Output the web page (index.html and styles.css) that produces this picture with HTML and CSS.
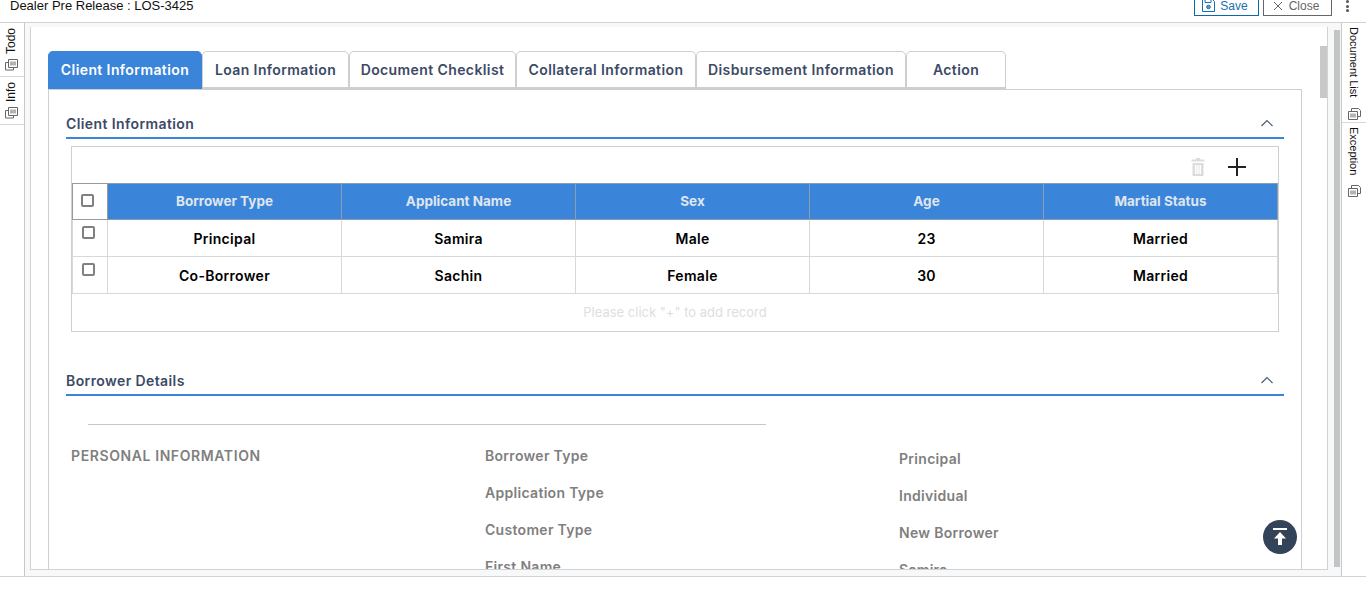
FILE: index.html
```html
<!DOCTYPE html>
<html lang="en">
<head>
  <meta charset="UTF-8">
  <meta name="viewport" content="width=device-width, initial-scale=1.0">
  <title>Dealer Pre Release</title>
  <link rel="stylesheet" href="styles.css">
</head>
<body>
  <header class="topbar">
    <div class="page-title">Dealer Pre Release : LOS-3425</div>
    <div class="top-actions">
      <button class="btn btn-save">
        <svg width="13" height="13" viewBox="0 0 13 13" fill="none" stroke="#1a6fae" stroke-width="1"><path d="M.5.5h10l2 2v10H.5z"/><path d="M3 .5v3h6v-3"/><circle cx="6.5" cy="8" r="1.800" fill="#5a9fd0"/></svg>
        Save
      </button>
      <button class="btn btn-close">
        <svg width="10" height="10" viewBox="0 0 10 10" stroke="#666" stroke-width="1"><path d="M1 1l8 8M9 1l-8 8"/></svg>
        Close
      </button>
      <div class="kebab"><i></i><i></i><i></i></div>
    </div>
  </header>

  <div class="workspace">
    <aside class="rail rail-left">
      <div class="rail-item">
        <span class="rail-text">Todo</span>
        <svg class="rail-icon" width="13" height="12" viewBox="0 0 13 12" fill="none" stroke="#666"><path d="M3.500 3.500H.5v7.500h8V8.500"/><path d="M3.500.5h9v8h-9z" fill="#fff"/><path d="M6 2.500v4M8 2.500v4M10 2.500v4"/></svg>
      </div>
      <div class="rail-item">
        <span class="rail-text">Info</span>
        <svg class="rail-icon" width="13" height="12" viewBox="0 0 13 12" fill="none" stroke="#666"><path d="M3.500 3.500H.5v7.500h8V8.500"/><path d="M3.500.5h9v8h-9z" fill="#fff"/><path d="M6 2.500v4M8 2.500v4M10 2.500v4"/></svg>
      </div>
    </aside>

    <main class="center">
      <div class="panel">
        <div class="panel-scroll">
          <nav class="tabs">
            <div class="tab tab-active">Client Information</div>
            <div class="tab tab-loan">Loan Information</div>
            <div class="tab tab-doc">Document Checklist</div>
            <div class="tab tab-coll">Collateral Information</div>
            <div class="tab tab-disb">Disbursement Information</div>
            <div class="tab tab-action">Action</div>
          </nav>

          <div class="tab-body">
            <section class="section">
              <div class="section-head">
                <span>Client Information</span>
                <svg class="chevron" width="14" height="8" viewBox="0 0 14 8" fill="none" stroke="#4a5a78" stroke-width="1.200"><path d="M1.500 7L7 1.500 12.500 7"/></svg>
              </div>
              <div class="grid-box">
                <div class="grid-tools">
                  <svg width="14" height="18" viewBox="0 0 14 18" fill="#dcdcdc"><path d="M5 0h4v1.500h4.500v2H.5v-2H5z"/><path d="M1.500 5h11v13h-11zM4 7v9h1.500V7zM6.300 7v9h1.500V7zM8.500 7v9H10V7z" fill-rule="evenodd"/></svg>
                  <svg width="20" height="20" viewBox="0 0 20 20" stroke="#222" stroke-width="2"><path d="M10 1v18M1 10h18"/></svg>
                </div>
                <table class="grid">
                  <thead>
                    <tr>
                      <th class="col-check"><span class="check"></span></th>
                      <th>Borrower Type</th>
                      <th>Applicant Name</th>
                      <th>Sex</th>
                      <th>Age</th>
                      <th>Martial Status</th>
                    </tr>
                  </thead>
                  <tbody>
                    <tr>
                      <td class="col-check"><span class="check"></span></td>
                      <td>Principal</td>
                      <td>Samira</td>
                      <td>Male</td>
                      <td>23</td>
                      <td>Married</td>
                    </tr>
                    <tr>
                      <td class="col-check"><span class="check"></span></td>
                      <td>Co-Borrower</td>
                      <td>Sachin</td>
                      <td>Female</td>
                      <td>30</td>
                      <td>Married</td>
                    </tr>
                  </tbody>
                </table>
                <div class="grid-empty">Please click "+" to add record</div>
              </div>
            </section>

            <section class="section section-borrower">
              <div class="section-head">
                <span>Borrower Details</span>
                <svg class="chevron" width="14" height="8" viewBox="0 0 14 8" fill="none" stroke="#4a5a78" stroke-width="1.200"><path d="M1.500 7L7 1.500 12.500 7"/></svg>
              </div>
              <div class="divider"></div>
              <div class="details">
                <div class="details-title">PERSONAL INFORMATION</div>
                <div class="details-labels">
                  <div>Borrower Type</div>
                  <div>Application Type</div>
                  <div>Customer Type</div>
                  <div>First Name</div>
                </div>
                <div class="details-values">
                  <div>Principal</div>
                  <div>Individual</div>
                  <div>New Borrower</div>
                  <div>Samira</div>
                </div>
              </div>
            </section>
          </div>
        </div>
        <div class="inner-thumb"></div>
        <button class="to-top">
          <svg width="16" height="18" viewBox="0 0 16 18" fill="#fff"><path d="M1 0h14v2H1z"/><path d="M8 4l6 6.500h-4V17H6v-6.500H2z"/></svg>
        </button>
      </div>
      <div class="outer-track"></div>
    </main>

    <aside class="rail rail-right">
      <div class="rail-item">
        <span class="rail-text">Document List</span>
        <svg class="rail-icon" width="13" height="12" viewBox="0 0 13 12" fill="none" stroke="#666"><path d="M3.500 3V.5h7l2 2v6h-3"/><path d="M.5 3.500h9v8h-9z" fill="#fff"/><path d="M3 5.500v4M5 5.500v4M7 5.500v4"/></svg>
      </div>
      <div class="rail-item">
        <span class="rail-text">Exception</span>
        <svg class="rail-icon" width="13" height="12" viewBox="0 0 13 12" fill="none" stroke="#666"><path d="M3.500 3V.5h7l2 2v6h-3"/><path d="M.5 3.500h9v8h-9z" fill="#fff"/><path d="M3 5.500v4M5 5.500v4M7 5.500v4"/></svg>
      </div>
    </aside>
  </div>
</body>
</html>
```

FILE: styles.css
```css
* {
  box-sizing: border-box;
}

html, body {
  margin: 0;
  height: 589px;
  overflow: hidden;
  background: #fff;
}

body {
  font-family: Inter, "Open Sans", sans-serif;
  font-size: 14px;
  letter-spacing: 0.4px;
  display: flex;
  flex-direction: column;
}

/* top bar, scrolled partly out of view */
.topbar {
  height: 23px;
  flex: none;
  display: flex;
  justify-content: space-between;
  align-items: flex-end;
  border-bottom: 1px solid #d2d2d2;
  padding: 0 0 6px 10px;
  overflow: hidden;
  font-family: "Liberation Sans", Arial, sans-serif;
  letter-spacing: 0;
}

.page-title {
  font-size: 13px;
  line-height: 14px;
  margin-bottom: 3px;
  color: #111;
}

.top-actions {
  display: flex;
  align-items: flex-end;
  gap: 4px;
}

.btn {
  height: 24px;
  background: #fff;
  font-family: "Liberation Sans", Arial, sans-serif;
  font-size: 12px;
  display: flex;
  align-items: center;
  justify-content: center;
  gap: 5px;
  padding: 3px 3px 0 0;
  border: 1px solid;
}

.btn-save {
  width: 65px;
  color: #1a6fae;
  border-color: #0f68a6;
}

.btn-close {
  width: 69px;
  gap: 6px;
  color: #666;
  border-color: #666;
}

.kebab {
  width: 30px;
  height: 12px;
  margin-bottom: 4px;
  padding-left: 10px;
  display: flex;
  flex-direction: column;
  justify-content: space-between;
}

.kebab i {
  display: block;
  width: 3px;
  height: 3px;
  border-radius: 50%;
  background: #555;
}

.workspace {
  height: 554px;
  flex: none;
  display: flex;
  border-bottom: 1px solid #d2d2d2;
}

/* side rails with vertical labels */
.rail {
  flex: none;
  font-family: "Liberation Sans", Arial, sans-serif;
  letter-spacing: 0;
  color: #111;
}

.rail-left {
  width: 25px;
  font-size: 12px;
  border-right: 1px solid #c8c8c8;
}

.rail-right {
  width: 25px;
  font-size: 11px;
  border-left: 1px solid #c8c8c8;
}

.rail-item {
  display: flex;
  flex-direction: column;
  align-items: center;
  border-bottom: 1px solid #d8d8d8;
}

.rail-text {
  writing-mode: vertical-rl;
  line-height: 14px;
}

.rail-left .rail-text {
  transform: rotate(180deg);
}

.rail-left .rail-item {
  padding: 5px 2px 5px 0;
  gap: 5px;
}

.rail-right .rail-item {
  padding: 4px 0 2px;
  gap: 11px;
}

.rail-right .rail-item:nth-child(2) {
  gap: 9px;
  border-bottom: none;
}

/* centre area */
.center {
  flex: 1;
  display: flex;
  background: #f7f8fa;
  padding: 4px 1px 6px 5px;
  gap: 6px;
}

.panel {
  flex: 1;
  position: relative;
  background: #fff;
  border: 1px solid #d2d2d2;
  border-width: 0 1px 1px 1px;
  overflow: hidden;
}

.panel-scroll {
  padding: 24px 25px 0 17px;
}

.outer-track {
  width: 6px;
  flex: none;
  margin-top: 3px;
  margin-bottom: 3px;
  background: #c4c4c4;
}

.inner-thumb {
  position: absolute;
  top: 19px;
  right: 0;
  width: 7px;
  height: 52px;
  background: #c8c8c8;
}

.to-top {
  position: absolute;
  left: 1232px;
  top: 493px;
  width: 34px;
  height: 34px;
  border: none;
  border-radius: 50%;
  background: #33435a;
  display: flex;
  align-items: center;
  justify-content: center;
  padding: 0;
}

/* tabs */
.tabs {
  display: flex;
  height: 38px;
}

.tab {
  font-weight: 600;
  color: #3c4a66;
  background: #fff;
  border: 1px solid #cfcfcf;
  border-bottom-width: 2px;
  border-radius: 5px 5px 0 0;
  display: flex;
  align-items: center;
  justify-content: center;
}

.tab-active {
  width: 154px;
  color: #fff;
  background: #3a84d9;
  border-color: #3a84d9;
}

.tab-loan { width: 147px; }
.tab-doc { width: 167px; }
.tab-coll { width: 180px; }
.tab-disb { width: 210px; }
.tab-action { width: 100px; }

.tab-body {
  border: 1px solid #cfcfcf;
  border-width: 1px 1px 0 1px;
  padding: 21px 17px 0 17px;
  height: 600px;
}

/* sections */
.section-head {
  height: 28px;
  display: flex;
  justify-content: space-between;
  align-items: center;
  padding-right: 10px;
  padding-bottom: 2px;
  font-weight: 600;
  color: #3c4a66;
  border-bottom: 2px solid #3a84d9;
}

.grid-box {
  margin: 7px 5px 0;
  height: 186px;
  border: 1px solid #cfcfcf;
}

.grid-tools {
  height: 36px;
  display: flex;
  justify-content: flex-end;
  align-items: center;
  gap: 22px;
  padding: 4px 31px 0 0;
}

.grid {
  width: 1206px;
  table-layout: fixed;
  border-collapse: collapse;
  font-size: 14px;
  letter-spacing: 0.3px;
}

.grid th {
  height: 36px;
  padding: 0 0 2px;
  background: #3a84d9;
  color: #dfe6ee;
  font-weight: 700;
  font-size: 13.500px;
  letter-spacing: 0;
  border: 1px solid #8c9cb0;
}

.grid td {
  height: 37px;
  padding: 0;
  text-align: center;
  color: #000;
  font-weight: 600;
  border: 1px solid #d8d8d8;
}

.grid .col-check {
  width: 35px;
  background: #fff;
  vertical-align: top;
  text-align: left;
}

.grid th.col-check {
  border-color: #999;
}

.check {
  display: block;
  width: 13px;
  height: 13px;
  border: 2px solid #808080;
  border-radius: 2px;
  margin: 6px 0 0 9px;
}

.grid th .check {
  margin: 10px 0 0 8px;
}

.grid-empty {
  height: 38px;
  line-height: 37px;
  text-align: center;
  color: #dedede;
  font-size: 13px;
  letter-spacing: 0;
}

.section-borrower {
  margin-top: 36px;
}

.divider {
  width: 678px;
  margin: 28px 0 0 22px;
  border-top: 1px solid #c8c8c8;
}

.details {
  display: grid;
  grid-template-columns: 414px 414px 1fr;
  padding: 22px 0 0 5px;
  font-weight: 600;
  color: #7f7f7f;
  letter-spacing: 0.3px;
}

.details-labels div {
  height: 37px;
  line-height: 18px;
}

.details-values {
  padding-top: 3px;
}

.details-values div {
  height: 37px;
  line-height: 18px;
}

.details-title {
  line-height: 18px;
  letter-spacing: 0.6px;
}
```
